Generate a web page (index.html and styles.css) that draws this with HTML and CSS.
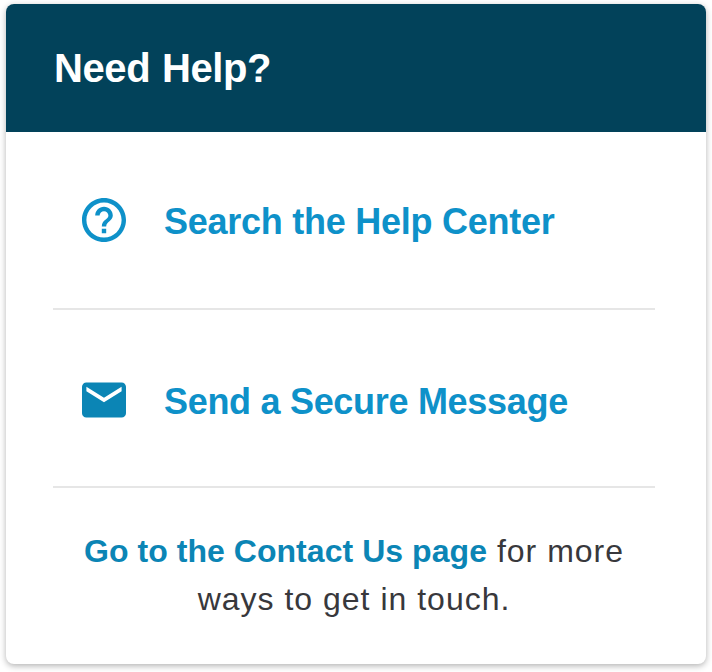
FILE: index.html
```html
<!DOCTYPE html>
<html lang="en">
<head>
<meta charset="utf-8">
<title>Need Help?</title>
<link rel="stylesheet" href="styles.css">
</head>
<body>
<section class="card">
  <header class="card-header"><h1>Need Help?</h1></header>
  <div class="card-body">
    <a class="row" href="#">
      <svg class="icon help" viewBox="2 2 20 20" fill="currentColor"><path d="M11 18h2v-2h-2v2zm1-16C6.480 2 2 6.480 2 12s4.480 10 10 10 10-4.480 10-10S17.520 2 12 2zm0 18c-4.410 0-8-3.590-8-8s3.590-8 8-8 8 3.590 8 8-3.590 8-8 8zm0-14c-2.210 0-4 1.790-4 4h2c0-1.100.9-2 2-2s2 .9 2 2c0 2-3 1.750-3 5h2c0-2.250 3-2.500 3-5 0-2.210-1.790-4-4-4z"/></svg>
      <span>Search the Help Center</span>
    </a>
    <a class="row second" href="#">
      <svg class="icon" viewBox="2 2 20 20" fill="currentColor"><path d="M20 4H4c-1.100 0-2 .9-2 2v12c0 1.100.9 2 2 2h16c1.100 0 2-.9 2-2V6c0-1.100-.9-2-2-2zm0 4l-8 5-8-5V6l8 5 8-5v2z"/></svg>
      <span>Send a Secure Message</span>
    </a>
    <p class="contact"><a href="#">Go to the Contact Us page</a> for more<br>ways to get in touch.</p>
  </div>
</section>
</body>
</html>
```

FILE: styles.css
```css
* { box-sizing: border-box; }
body { margin: 0; padding: 4px 6px 8px; background: #fff; font-family: "Liberation Sans", Arial, sans-serif; }
.card { height: 660px; border-radius: 8px; background: #fff; box-shadow: 0 2px 6px rgba(0, 0, 0, .3); overflow: hidden; }
.card-header { display: flex; align-items: center; height: 128px; padding: 0 48px; background: #02425a; color: #fff; }
h1 { margin: 0; font-size: 40px; line-height: 48px; font-weight: 700; letter-spacing: -.4px; word-spacing: 1px; }
.card-body { padding: 0 51px 0 47px; }
.row { display: flex; align-items: flex-start; gap: 38px; height: 178px; padding: 66px 0 0 29px; border-bottom: 2px solid #e6e6e6; color: #0e91c9; font-size: 36px; line-height: 48px; font-weight: 700; letter-spacing: -.25px; text-decoration: none; white-space: nowrap; }
.icon { width: 44px; height: 44px; flex: none; color: #0b85b5; }
.help { color: #0e91c9; }
.second { padding-top: 68px; letter-spacing: -.3px; }
.contact { margin: 39px 0 0; color: #38383c; font-size: 32px; line-height: 48px; letter-spacing: 1px; text-align: center; white-space: nowrap; }
.contact a { color: #0b85b5; font-weight: 700; letter-spacing: .05px; text-decoration: none; }
```
